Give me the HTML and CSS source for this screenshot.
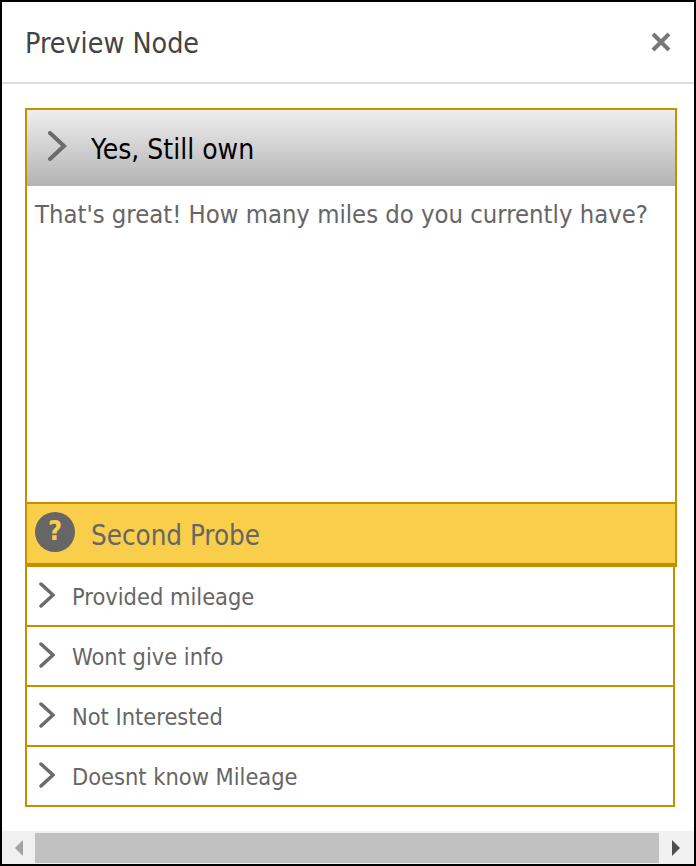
FILE: index.html
```html
<!DOCTYPE html>
<html lang="en">
<head>
  <meta charset="UTF-8" />
  <title>Preview Node</title>
  <link rel="stylesheet" href="styles.css">
</head>
<body>
  <div class="dialog">
    <div class="dialog-head">
      <h1>Preview Node</h1>
      <svg class="close-icon" width="22" height="22" viewBox="0 0 22 22"><path d="M3 3 L19 19 M19 3 L3 19" /></svg>
    </div>

    <div class="dialog-body">
      <div class="node">
        <div class="node-title">
          <svg class="chevron-big" width="20" height="30" viewBox="0 0 20 30"><path d="M3 2 L17 15 L3 28" /></svg>
          <span>Yes, Still own</span>
        </div>
        <div class="node-text">That's great! How many miles do you currently have?</div>
        <div class="probe">
          <span class="probe-icon">?</span>
          <span>Second Probe</span>
        </div>
      </div>

      <ul class="answers">
        <li><svg class="chevron" width="16" height="26" viewBox="0 0 16 26"><path d="M2 2 L14 13 L2 24" /></svg>Provided mileage</li>
        <li><svg class="chevron" width="16" height="26" viewBox="0 0 16 26"><path d="M2 2 L14 13 L2 24" /></svg>Wont give info</li>
        <li><svg class="chevron" width="16" height="26" viewBox="0 0 16 26"><path d="M2 2 L14 13 L2 24" /></svg>Not Interested</li>
        <li><svg class="chevron" width="16" height="26" viewBox="0 0 16 26"><path d="M2 2 L14 13 L2 24" /></svg>Doesnt know Mileage</li>
      </ul>
    </div>

    <div class="scrollbar">
      <span class="arrow arrow-left"></span>
      <div class="thumb"></div>
      <span class="arrow arrow-right"></span>
    </div>
  </div>
</body>
</html>
```

FILE: styles.css
```css
* {
  box-sizing: border-box;
}

body {
  margin: 0;
  font-family: "DejaVu Sans", Arial, sans-serif;
  font-stretch: condensed;
  background-color: #fff;
}

.dialog {
  width: 696px;
  height: 866px;
  border: 2px solid #000;
  display: flex;
  flex-direction: column;
  background-color: #fff;
  overflow: hidden;
}

.dialog-head {
  height: 82px;
  flex-shrink: 0;
  border-bottom: 2px solid #ddd;
  padding: 0 23px;
  display: flex;
  align-items: center;
  justify-content: space-between;
}

.dialog-head h1 {
  margin: 2px 0 0;
  font-size: 28.4px;
  font-weight: 400;
  color: #444;
}

.close-icon {
  fill: none;
  stroke: #777;
  stroke-width: 4;
  margin-right: -1px;
}

.dialog-body {
  flex: 1;
  padding: 24px 19px 0 23px;
}

.node {
  width: 652px;
  height: 459px;
  border: 2px solid #c49000;
  border-bottom: none;
  display: flex;
  flex-direction: column;
}

.node-title {
  height: 76px;
  flex-shrink: 0;
  background: linear-gradient(#eeeeee, #b3b3b3);
  padding: 2px 0 0 20px;
  display: flex;
  align-items: center;
  gap: 24px;
  font-size: 28px;
  color: #000;
}

.chevron-big {
  fill: none;
  stroke: #6b6b6b;
  stroke-width: 4;
  stroke-linecap: round;
  margin-bottom: 6px;
}

.node-text {
  flex: 1;
  padding: 11px 8px;
  font-size: 25.4px;
  line-height: 35px;
  color: #666;
  white-space: nowrap;
}

.probe {
  height: 65px;
  flex-shrink: 0;
  margin: 0 -2px;
  padding: 2px 0 0 8px;
  background-color: #f9ce4b;
  border: 2px solid #c49000;
  border-bottom-width: 4px;
  display: flex;
  align-items: center;
  gap: 16px;
  font-size: 27.5px;
  color: #666;
}

.probe-icon {
  width: 40px;
  height: 40px;
  margin-bottom: 5px;
  border-radius: 50%;
  background-color: #666;
  color: #f9ce4b;
  font-size: 27px;
  font-weight: 700;
  line-height: 38px;
  text-align: center;
}

.answers {
  list-style: none;
  margin: 0;
  padding: 0;
  width: 650px;
  border: 2px solid #c49000;
  border-top: none;
}

.answers li {
  height: 60px;
  padding: 2px 0 0 12px;
  display: flex;
  align-items: center;
  gap: 17px;
  font-size: 23.4px;
  color: #666;
  border-bottom: 2px solid #c49000;
}

.answers li:last-child {
  border-bottom: none;
  height: 58px;
}

.chevron {
  fill: none;
  stroke: #6b6b6b;
  stroke-width: 3.5;
  stroke-linecap: round;
  margin-bottom: 4px;
}

.scrollbar {
  height: 33px;
  flex-shrink: 0;
  background-color: #f0f0f0;
  padding: 2px 0 1px;
  display: flex;
  align-items: center;
}

.thumb {
  width: 624px;
  height: 30px;
  background-color: #c1c1c1;
}

.arrow {
  width: 33px;
  display: flex;
  justify-content: center;
}

.arrow::before {
  content: "";
  border-top: 8px solid transparent;
  border-bottom: 8px solid transparent;
}

.arrow-left::before {
  border-right: 8px solid #a3a3a3;
}

.arrow-right::before {
  border-left: 8px solid #505050;
}
```
